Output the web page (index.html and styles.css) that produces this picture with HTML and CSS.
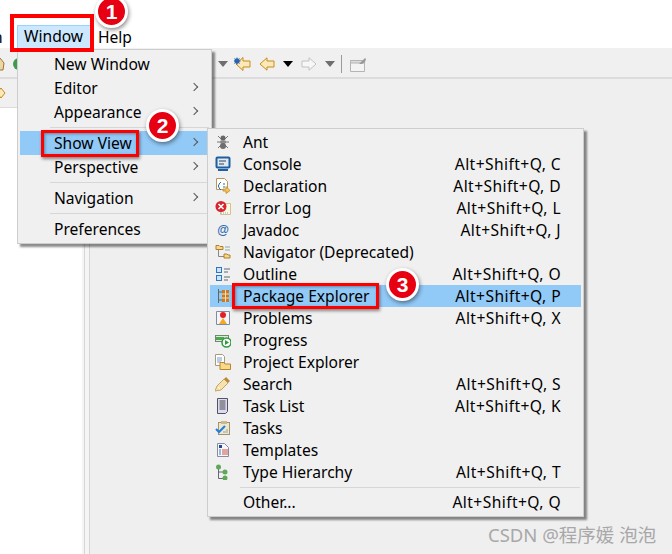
FILE: index.html
```html
<!DOCTYPE html>
<html lang="en">
<head>
<meta charset="utf-8">
<title>Eclipse Show View menu</title>
<link rel="stylesheet" href="styles.css">
</head>
<body>
<div class="app">
  <header class="menubar">
    <span class="mb-cut">n</span>
    <span class="mb-item mb-active">Window</span>
    <span class="mb-item mb-help">Help</span>
  </header>
  <div class="toolbar">
    <svg class="tb-left" width="22" height="16" viewBox="0 0 22 16"><path d="M-4 8 0 2 4 7 3 14H-3z" fill="#e8d8a8" stroke="#a8702c"/><path d="M19 2a6 6 0 0 0 0 12z" fill="#3f9a4e"/></svg>
    <div class="tb-right">
      <svg class="tri" width="10" height="6" viewBox="0 0 10 6"><path d="M0 0h10L5 6z" fill="#6e6e6e"/></svg>
      <svg class="tb-ic ic-star" width="17" height="16" viewBox="0 0 17 16"><path d="M16 5H9V1.500L2 8l7 6.500V11h7z" fill="#fbe9b7" stroke="#c8891c"/><path d="M3 1l1 2 2-1-1 2 2 1-2 1 1 2-2-1-1 2-1-2-2 1 1-2-2-1 2-1-1-2 2 1z" fill="#2b63b0"/></svg>
      <svg class="tb-ic ic-back" width="16" height="14" viewBox="0 0 16 14"><path d="M15 4H8V.8L1 7l7 6.200V10h7z" fill="#fbe9b7" stroke="#c8891c"/></svg>
      <svg class="tri tri-b" width="10" height="6" viewBox="0 0 10 6"><path d="M0 0h10L5 6z" fill="#000"/></svg>
      <svg class="tb-ic ic-fwd" width="16" height="14" viewBox="0 0 16 14"><path d="M1 4h7V.8L15 7l-7 6.200V10H1z" fill="#f7f7f7" stroke="#c2c2c2"/></svg>
      <svg class="tri tri-g" width="10" height="6" viewBox="0 0 10 6"><path d="M0 0h10L5 6z" fill="#6e6e6e"/></svg>
      <span class="tb-sep"></span>
      <svg class="ic-pin" width="17" height="15" viewBox="0 0 17 15"><path d="M.5 3.500h14v11H.5z" fill="#f4f4f4" stroke="#b4b4b4"/><path d="M.5 3.500h14V6H.5z" fill="#dcdcdc" stroke="#b4b4b4"/><path d="M9 7l4-4 2-2 1 1-1 3-3 2z" fill="#9a9a9a"/></svg>
    </div>
  </div>
  <main class="workspace">
    <aside class="leftpane">
      <div class="leftbar"><svg width="10" height="16" viewBox="0 0 10 16"><path d="M-3 8 1 3 5 8 1 13z" fill="#fbe9b7" stroke="#c8891c"/></svg></div>
    </aside>
    <div class="sash"></div>
    <div class="editor"></div>
  </main>

  <nav class="menu menu-window">
    <div class="mi">New Window</div>
    <div class="mi">Editor<i class="chev"></i></div>
    <div class="mi">Appearance<i class="chev"></i></div>
    <div class="msep"></div>
    <div class="mi mi-on">Show View<i class="chev"></i></div>
    <div class="mi">Perspective<i class="chev"></i></div>
    <div class="msep"></div>
    <div class="mi">Navigation<i class="chev"></i></div>
    <div class="msep"></div>
    <div class="mi">Preferences</div>
  </nav>

  <nav class="menu menu-views">
    <div class="vi">
      <svg class="vic" viewBox="0 0 16 16"><g stroke="#777" fill="none"><path d="M3 2l3 3M13 2l-3 3M2 8h12M3 14l3-3M13 14l-3-3"/></g><ellipse cx="8" cy="4" rx="2.500" ry="2.500" fill="#666"/><ellipse cx="8" cy="8" rx="3" ry="2" fill="#8a8a8a"/><ellipse cx="8" cy="12" rx="3" ry="3" fill="#6e6e6e"/></svg>
      <span class="vl">Ant</span></div>
    <div class="vi">
      <svg class="vic" viewBox="0 0 16 16"><rect x="1.500" y="1.500" width="13" height="10" rx="1" fill="#dfe8f3" stroke="#1f5fa0" stroke-width="2"/><path d="M4 5h7M4 8h5" stroke="#345"/><path d="M3 14h10" stroke="#1f5fa0" stroke-width="2"/></svg>
      <span class="vl">Console</span><span class="vk">Alt+Shift+Q, C</span></div>
    <div class="vi">
      <svg class="vic" viewBox="0 0 16 16"><path d="M1.500.5h8l3 3v8h-11z" fill="#fff" stroke="#b8975a"/><path d="M6 4 4 6v1L3 8l1 1v1l2 2M8 6h2M8 9h2" fill="none" stroke="#2c6cb0"/><path d="M8 11h3V8.500l4 4-4 3V13H8z" fill="#f4c55c" stroke="#c08a20" stroke-width=".8"/></svg>
      <span class="vl">Declaration</span><span class="vk">Alt+Shift+Q, D</span></div>
    <div class="vi">
      <svg class="vic" viewBox="0 0 16 16"><path d="M5.500 3.500h10v11h-10z" fill="#fdf6e3" stroke="#d4c48c"/><path d="M6 13h8" stroke="#8ab" stroke-dasharray="1 1"/><circle cx="6" cy="6.500" r="5.500" fill="#d8242c"/><path d="M3.500 4l5 5M8.500 4l-5 5" stroke="#fff" stroke-width="1.600"/></svg>
      <span class="vl">Error Log</span><span class="vk">Alt+Shift+Q, L</span></div>
    <div class="vi">
      <svg class="vic" viewBox="0 0 16 16"><text x="8" y="12" class="at">@</text></svg>
      <span class="vl">Javadoc</span><span class="vk">Alt+Shift+Q, J</span></div>
    <div class="vi">
      <svg class="vic" viewBox="0 0 16 16"><path d="M1 1.500h3l1 1h3v3H1z" fill="#f4d88c" stroke="#b07f2a"/><path d="M3.500 6v6.500H9" fill="none" stroke="#888"/><path d="M9 10h3l1 1h2v3H9z" fill="#f4d88c" stroke="#b07f2a"/><path d="M10 3h5M10 6h5" stroke="#8aa" /></svg>
      <span class="vl">Navigator (Deprecated)</span></div>
    <div class="vi">
      <svg class="vic" viewBox="0 0 16 16"><rect x="1.500" y="1.500" width="5" height="5" fill="#cfe4f8" stroke="#2b78c2"/><rect x="1.500" y="9.500" width="5" height="5" fill="#cfe4f8" stroke="#2b78c2"/><path d="M9 3h6M9 6h4M9 11h6M9 14h4" stroke="#667"/></svg>
      <span class="vl">Outline</span><span class="vk">Alt+Shift+Q, O</span></div>
    <div class="vi vi-on">
      <svg class="vic" viewBox="0 0 16 16"><path d="M3.500 1v14M3.500 4H8M3.500 12H8" fill="none" stroke="#665"/><rect x="7" y="2" width="7" height="12" fill="#c77a2b"/><path d="M7 6h7M7 10h7M10.500 2v12" stroke="#f6dfa8"/></svg>
      <span class="vl">Package Explorer</span><span class="vk">Alt+Shift+Q, P</span></div>
    <div class="vi">
      <svg class="vic" viewBox="0 0 16 16"><path d="M1.500 1.500h13v13h-13z" fill="#f5f5f5" stroke="#7d8ba8"/><circle cx="8" cy="5" r="3" fill="#e0202a"/><path d="M8 8l4 6H4z" fill="#f5a623"/></svg>
      <span class="vl">Problems</span><span class="vk">Alt+Shift+Q, X</span></div>
    <div class="vi">
      <svg class="vic" viewBox="0 0 16 16"><rect x=".5" y="3.500" width="13" height="6" fill="#dfe7df" stroke="#6e8a6e"/><rect x="1" y="5" width="8" height="3" fill="#4fa64f"/><circle cx="11.500" cy="10.500" r="4.500" fill="#fff" stroke="#2e9a3e" stroke-width="1.500"/><path d="M10 8l4 2.500-4 2.500z" fill="#2e9a3e"/></svg>
      <span class="vl">Progress</span></div>
    <div class="vi">
      <svg class="vic" viewBox="0 0 16 16"><path d="M.5.5h7l2 2v9h-9z" fill="#fff" stroke="#a89a78"/><path d="M2 4h5M2 6h5M2 8h4" stroke="#7a9ac8"/><path d="M5 8.500h4l1 1.500h5.500v5.500H5z" fill="#f8d98a" stroke="#b8862c"/></svg>
      <span class="vl">Project Explorer</span></div>
    <div class="vi">
      <svg class="vic" viewBox="0 0 16 16"><path d="M0 15l2-5 7-7 4 4-7 7z" fill="#f7e2ae" stroke="#c9a45c"/><path d="M9 3l2-2 4 4-2 2z" fill="#b98a3e"/><path d="M3 11l2 2" stroke="#fff"/></svg>
      <span class="vl">Search</span><span class="vk">Alt+Shift+Q, S</span></div>
    <div class="vi">
      <svg class="vic" viewBox="0 0 16 16"><path d="M2.500.5h10v13l-2 2h-8z" fill="#dcdcf0" stroke="#555068"/><path d="M4.500 3h6M4.500 5h6M4.500 7h6M4.500 9h6M4.500 11h6" stroke="#444"/></svg>
      <span class="vl">Task List</span><span class="vk">Alt+Shift+Q, K</span></div>
    <div class="vi">
      <svg class="vic" viewBox="0 0 16 16"><rect x="3.500" y="2.500" width="11" height="12" fill="#efe6d0" stroke="#a8926a"/><rect x="6" y="1" width="6" height="3" fill="#cdb88c"/><path d="M1 9l3 3 6-6" fill="none" stroke="#1f7fd8" stroke-width="2"/><path d="M11 10h2M8 12h5" stroke="#8aa"/></svg>
      <span class="vl">Tasks</span></div>
    <div class="vi">
      <svg class="vic" viewBox="0 0 16 16"><path d="M2.500 1.500h7l4 4v9h-11z" fill="#f6f6ff" stroke="#8a8aa0"/><rect x="4" y="3" width="3" height="3" fill="#234a8a"/><path d="M7 8h6M7 10h6M7 12h6" stroke="#d05040"/><path d="M4 8h2M4 10h2M4 12h2" stroke="#3a7ac0"/></svg>
      <span class="vl">Templates</span></div>
    <div class="vi">
      <svg class="vic" viewBox="0 0 16 16"><path d="M3.500 3v11.500H8M3.500 8H8" fill="none" stroke="#667"/><circle cx="3.500" cy="3" r="2.500" fill="#5fa85a"/><circle cx="10" cy="8" r="2.500" fill="#5fa85a"/><circle cx="10" cy="14" r="2.500" fill="#5fa85a"/></svg>
      <span class="vl">Type Hierarchy</span><span class="vk">Alt+Shift+Q, T</span></div>
    <div class="vsep"></div>
    <div class="vi vi-plain"><span class="vl">Other...</span><span class="vk">Alt+Shift+Q, Q</span></div>
  </nav>

  <div class="mark mark-1"></div>
  <div class="mark mark-2"></div>
  <div class="mark mark-3"></div>
  <div class="num num-1">1</div>
  <div class="num num-2">2</div>
  <div class="num num-3">3</div>
  <div class="wm">CSDN @程序媛 泡泡</div>
</div>
</body>
</html>
```
FILE: styles.css
```css
* { box-sizing: border-box; }
html, body { margin: 0; padding: 0; }
body { width: 672px; height: 554px; overflow: hidden; background: #f0f0f0; }
.app {
  position: relative; width: 672px; height: 554px; overflow: hidden;
  display: flex; flex-direction: column;
  font-family: "Noto Sans", "Open Sans", sans-serif; font-size: 15.6px; color: #000;
}
.menubar { height: 48px; flex: none; background: #fff; position: relative; }
.menubar { display: flex; align-items: flex-start; }
.mb-cut { width: 17px; padding-top: 26px; line-height: 22px; margin-left: -7px; flex: none; text-align: left; }
.mb-item { line-height: 22px; }
.mb-active {
  margin: 25px 0 0 7px; width: 74px; height: 24px; background: #cce8ff; border: 1px solid #99d1ff;
  padding-left: 6px; line-height: 21px; flex: none;
}
.mb-help { margin: 26px 0 0 7px; }
.toolbar {
  height: 31px; flex: none; background: #f0f0f0; border-bottom: 2px solid #dcdcdc;
  display: flex; align-items: center; justify-content: space-between; padding-top: 3px;
}
.tb-left { margin-left: 0; }
.tb-right { display: flex; align-items: center; margin-left: auto; margin-right: 305px; }
.tri { flex: none; }
.ic-star { margin-left: 6px; }
.ic-back { margin-left: 8px; }
.tri-b { margin-left: 8px; }
.ic-fwd { margin-left: 8px; }
.tri-g { margin-left: 8px; }
.tb-sep { width: 1px; height: 18px; background: #9a9a9a; margin-left: 6px; }
.ic-pin { margin-left: 8px; }
.workspace { flex: 1; display: flex; min-height: 0; }
.leftpane { width: 82px; flex: none; background: #fff; }
.leftbar { height: 29px; background: #f0f0f0; border-bottom: 1px solid #dcdcdc; display: flex; align-items: center; }
.sash { width: 8px; flex: none; background: #f5f5f5; border-left: 0; position: relative; border-right: 1px solid #d6d6d6; }
.sash::before { content: ""; display: block; width: 1px; height: 100%; margin-left: 2px; background: #d6d6d6; }
.editor { flex: 1; background: #efefef; }

.menu { position: absolute; background: #f0f0f0; border: 1px solid #cdcdcd; box-shadow: 3px 3px 2px rgba(0,0,0,.45); }
.menu-window { left: 17px; top: 49px; width: 195px; height: 195px; padding: 2px; }
.mi { height: 24px; line-height: 24px; padding-left: 34px; position: relative; }
.mi-on { background: #91c9f7; }
.msep { height: 7px; margin-left: 30px; position: relative; }
.msep::before { content: ""; display: block; height: 1px; background: #d7d7d7; position: relative; top: 3px; }
.chev { position: absolute; right: 12px; top: 8px; width: 6px; height: 6px; border-top: 1px solid #555; border-right: 1px solid #555; transform: rotate(45deg); }

.menu-views { left: 207px; top: 128px; width: 377px; height: 389px; padding: 2px; }
.vi { height: 22px; display: flex; align-items: center; padding-left: 5px; padding-right: 20px; line-height: 22px; }
.vi-on { background: #91c9f7; }
.vi-plain { padding-left: 34px; }
.vic { width: 16px; height: 16px; flex: none; margin-right: 13px; }
.vl { flex: 1; white-space: nowrap; margin-left: -1px; }
.vk { flex: none; letter-spacing: .42px; }
.vsep { height: 8px; margin-left: 30px; margin-right: 1px; position: relative; }
.vsep::before { content: ""; display: block; height: 1px; background: #d7d7d7; position: relative; top: 4px; }
.at { font: 700 12px "Liberation Sans", sans-serif; fill: #2c6cb0; text-anchor: middle; }

.mark { position: absolute; border: 3px solid #f00; box-shadow: 1px 2px 3px rgba(0,0,0,.45), inset 1px 1px 3px rgba(0,0,0,.35); }
.mark-1 { left: 10px; top: 14px; width: 84px; height: 38px; border-width: 4px; box-shadow: none; }
.mark-2 { left: 41px; top: 130px; width: 98px; height: 27px; }
.mark-3 { left: 232px; top: 283px; width: 147px; height: 26px; }
.num {
  position: absolute; width: 33px; height: 33px; border-radius: 50%; background: #e60012; border: 3px solid #fff;
  color: #fff; font: 700 21px/27px "Liberation Sans", sans-serif; text-align: center;
  box-shadow: 1px 2px 4px rgba(0,0,0,.45);
}
.num-1 { left: 95px; top: -5px; }
.num-2 { left: 146px; top: 109px; }
.num-3 { left: 386px; top: 268px; }
.wm {
  position: absolute; left: 488px; top: 523px; font: 18.500px/24px "Noto Sans", "Noto Sans CJK SC", sans-serif;
  color: #a8a8a8; white-space: nowrap;
}
```
